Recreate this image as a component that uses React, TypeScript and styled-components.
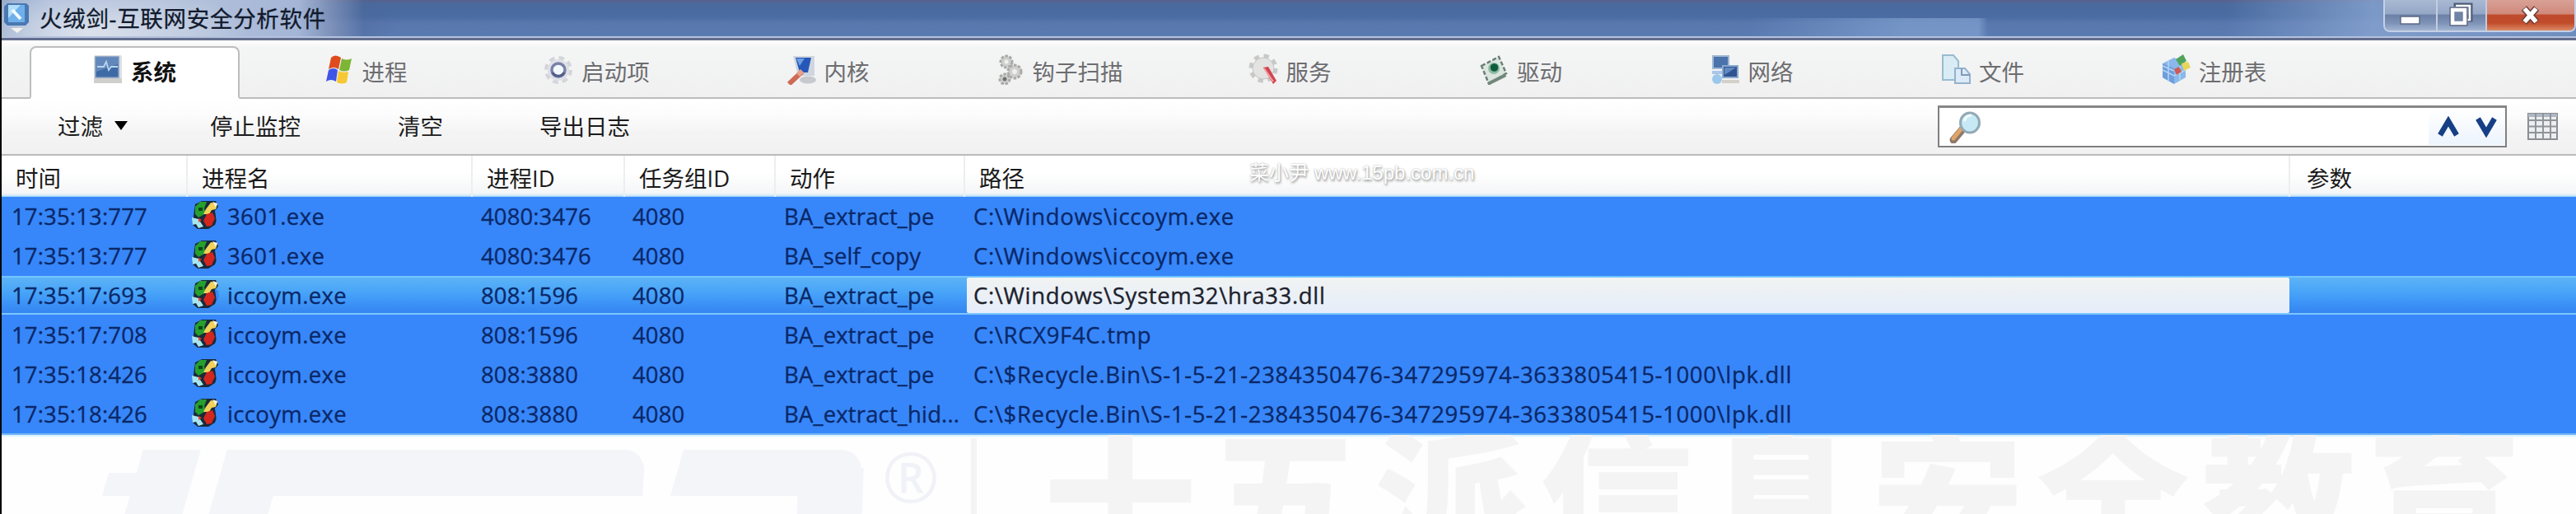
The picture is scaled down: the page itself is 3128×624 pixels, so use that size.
import React from 'react';
import styled, { createGlobalStyle, css } from 'styled-components';

const Global = createGlobalStyle`
  * { box-sizing: border-box; }
  html, body { margin: 0; padding: 0; background: #fff; }
  body { font-family: "Open Sans", "Noto Sans CJK SC", sans-serif; font-size: 27.5px; color: #1c1c1c; }
`;

const Window = styled.div`
  width: 3128px;
  height: 624px;
  overflow: hidden;
  position: relative;
  display: flex;
  flex-direction: column;
  border-left: 2px solid #000;
  background: #fff;
`;

/* ---------- title bar ---------- */
const TitleBar = styled.header`
  height: 49px;
  flex: none;
  display: flex;
  justify-content: space-between;
  border-bottom: 3px solid #626d8e;
  box-shadow: inset 0 -2px 0 #b4c2de;
  background:
    radial-gradient(ellipse 190px 60px at 110px 40px, rgba(225, 230, 238, 0.9), rgba(225, 230, 238, 0) 100%),
    linear-gradient(90deg, rgba(140, 172, 218, 0) 0, rgba(140, 172, 218, 0.55) 65%, rgba(140, 172, 218, 0.55) 96%, rgba(140, 172, 218, 0) 100%) 2120px 22px / 292px 24px no-repeat,
    linear-gradient(90deg, #8da3c8 0, #a9bad8 60px, #b0bfda 250px, #a4b5d6 360px, rgba(140, 155, 190, 0.7) 400px, rgba(76, 100, 150, 0.3) 440px, rgba(75, 110, 165, 0) 480px, rgba(75, 110, 165, 0) 2700px, rgba(140, 168, 212, 0.75) 2880px, rgba(140, 168, 212, 0.4) 100%),
    linear-gradient(180deg, #5a6088 0, #4a699d 4px, #4a6ca2 20px, #5877ad 28px, #5a7cb2 100%);
`;
const Caption = styled.div`
  display: flex;
  align-items: center;
  gap: 12px;
  padding: 0 0 4px 2px;
  height: 46px;
  color: #111a2c;
  font-size: 27.5px;
  letter-spacing: 0.7px;
  -webkit-text-stroke: 0.3px currentColor;
`;
const Controls = styled.div`
  display: flex;
  height: 39px;
  border: 2px solid #c4d0e6;
  border-top: 0;
  border-radius: 0 0 8px 8px;
  overflow: hidden;
`;
const Control = styled.div<{ $w: number; $close?: boolean }>`
  width: ${(p) => p.$w}px;
  display: flex;
  align-items: center;
  justify-content: center;
  border-right: ${(p) => (p.$close ? '0' : '2px solid #c3cde0')};
  background: ${(p) =>
    p.$close
      ? 'linear-gradient(180deg,#d9a096 0,#d08a7c 45%,#bf4a2c 50%,#c04c2b 75%,#dd8a66 100%)'
      : 'linear-gradient(180deg,#a9b9d3 0,#94a7c6 45%,#6c81a6 50%,#7d92b6 75%,#a2b4d2 100%)'};
`;

/* ---------- tabs ---------- */
const Tabs = styled.nav`
  height: 71px;
  flex: none;
  display: flex;
  align-items: flex-end;
  gap: 25.5px;
  padding-left: 34px;
  background: linear-gradient(180deg, #fff 0, #f4f5f5 8px, #f0f0f1 100%);
  box-shadow: inset 0 -2px 0 #bcbcbc;
`;
const Tab = styled.div<{ $active?: boolean }>`
  width: 255px;
  height: 64px;
  flex: none;
  display: flex;
  align-items: center;
  justify-content: center;
  gap: 10px;
  color: #6d6d70;
  border: 2px solid transparent;
  padding-bottom: 4px;
  ${(p) =>
    p.$active &&
    css`
      background: #fff;
      color: #111;
      font-weight: 600;
      border-color: #bdbdbd;
      border-bottom-color: #fff;
      border-radius: 8px 8px 0 0;
    `}
`;
const TabIcon = styled.svg`
  width: 36px;
  height: 38px;
  flex: none;
  margin-top: -4px;
`;

/* ---------- toolbar ---------- */
const Toolbar = styled.div`
  height: 69px;
  flex: none;
  display: flex;
  align-items: center;
  padding: 0 22px 1px 68px;
  background: linear-gradient(180deg, #fff 0, #fcfcfc 20px, #f4f4f4 40px, #f1f1f1 100%);
  border-bottom: 2px solid #bababa;
`;
const ToolButton = styled.div<{ $w: number }>`
  width: ${(p) => p.$w}px;
  display: flex;
  align-items: center;
  gap: 14px;
  padding-bottom: 2px;
`;
const Arrow = styled.span`
  border: 8.5px solid transparent;
  border-top: 11px solid #000;
  border-bottom: 0;
`;
const Search = styled.div`
  width: 691px;
  height: 51px;
  margin-left: auto;
  display: flex;
  align-items: center;
  justify-content: space-between;
  border: 2px solid #808080;
  border-top: 3px solid #878787;
  background: #fff;
  padding-left: 12px;
`;
const Stepper = styled.div`
  width: 93px;
  height: 44px;
  display: flex;
  align-items: center;
  justify-content: space-between;
  padding: 0 10px 0 11px;
  background: linear-gradient(180deg, #fff, #edf4fd);
`;
const GridIcon = styled.svg`
  width: 37px;
  height: 33px;
  margin-left: 25px;
`;

/* ---------- table ---------- */
const columns = '226px 346px 185px 183px 230px 1609px 1fr';
const Head = styled.div`
  height: 50px;
  flex: none;
  display: grid;
  grid-template-columns: ${columns};
  background: linear-gradient(180deg, #fff 0, #fff 40%, #f5f6f7 90%, #d9edf9 96%, #8fcdfb 100%);
`;
const HeadCell = styled.div`
  display: flex;
  align-items: center;
  padding: 1px 0 0 17px;
  border-right: 2px solid #eceef1;
  &:last-child { border-right: 0; padding-left: 20px; }
  color: #1a1a1a;
`;
const Body = styled.div`
  height: 289px;
  flex: none;
  display: flex;
  flex-direction: column;
  background: #3787fa;
  border-bottom: 2px solid #6fb6f8;
`;
const Row = styled.div<{ $selected?: boolean }>`
  flex: 1;
  display: grid;
  grid-template-columns: ${columns};
  color: #0b2868;
  ${(p) =>
    p.$selected &&
    css`
      background: linear-gradient(180deg, #5fb4f6 0, #46a3f8 45%, #3b90f6 75%, #3583f0 100%);
      box-shadow: inset 0 2px 0 #72c5fd, inset 0 -2px 0 #7cc6fd;
    `}
`;
const Cell = styled.div<{ $pad: number; $spacing?: number; $field?: boolean }>`
  display: flex;
  align-items: center;
  gap: 10px;
  padding-left: ${(p) => p.$pad}px;
  white-space: nowrap;
  letter-spacing: ${(p) => p.$spacing || 0}px;
  -webkit-text-stroke: 0.35px currentColor;
  ${(p) =>
    p.$field &&
    css`
      margin: 2px 1px 2px 2px;
      padding-left: ${p.$pad - 2}px;
      border-radius: 2px;
      color: #1d222c;
      background: linear-gradient(180deg, #f1f3f2 0, #ebf0f6 50%, #e6eefb 100%);
    `}
`;
const ProcIcon = styled.svg`
  width: 34px;
  height: 36px;
  flex: none;
  margin-top: -3px;
`;

/* ---------- backdrop brand ---------- */
const Backdrop = styled.section`
  flex: 1;
  position: relative;
  overflow: hidden;
  background: #fefefe;
  box-shadow: inset 0 3px 2px -1px #d8effc;
`;
const Slab = styled.div<{ $x: number; $y: number; $w: number; $h: number; $r?: number; $skew?: number }>`
  position: absolute;
  left: ${(p) => p.$x}px;
  top: ${(p) => p.$y}px;
  width: ${(p) => p.$w}px;
  height: ${(p) => p.$h}px;
  border-radius: 0 ${(p) => p.$r || 0}px 0 0;
  transform: skewX(${(p) => -(p.$skew ?? 16)}deg);
  background: #f4f5f9;
`;
const Registered = styled.div`
  position: absolute;
  left: 1069px;
  top: 2px;
  font-size: 84px;
  line-height: 96px;
  color: #f1f2f8;
`;
const Divider = styled.div`
  position: absolute;
  left: 1177px;
  top: 4px;
  width: 7px;
  height: 100px;
  background: #f4f4f5;
`;
const Slogan = styled.div`
  position: absolute;
  left: 1265px;
  top: -26px;
  font-family: "Noto Sans CJK SC", sans-serif;
  font-weight: 900;
  font-size: 186px;
  line-height: 186px;
  letter-spacing: 15px;
  white-space: nowrap;
  color: #f4f4f5;
`;
const Credit = styled.div`
  position: absolute;
  left: 1515px;
  top: 195px;
  font-family: "Liberation Sans", "Noto Sans CJK SC", sans-serif;
  font-size: 24px;
  line-height: 30px;
  white-space: nowrap;
  color: #fff;
  text-shadow: 0 0 2px #aaa, 1px 2px 3px #999;
`;

/* ---------- drawings ---------- */
const MonitorIcon = () => (
  <TabIcon viewBox="0 0 36 38">
    <rect x="1" y="2" width="34" height="34" rx="2" fill="#dcdfe2" />
    <rect x="1" y="30" width="34" height="6" rx="1" fill="#cfcfcc" />
    <rect x="3" y="4" width="28" height="25" fill="#3e6aa6" stroke="#7f9cc2" strokeWidth="1.500" />
    <path d="M4 5h26v8L4 22z" fill="#6187bb" />
    <path d="M5 16h8l3-6 3 10 3-4h8" fill="none" stroke="#b9d3ee" strokeWidth="1.800" />
  </TabIcon>
);
const FlagIcon = () => (
  <TabIcon viewBox="0 0 36 38">
    <path d="M8 5q5-5 12 0l-3 14q-6-4-12 0z" fill="#df4b1e" />
    <path d="M21 6q6 3 12 0l-3 14q-6 3-12 0z" fill="#7db536" />
    <path d="M5 20q6-4 11 0l-2 14q-6-4-12 0z" fill="#3f55e8" />
    <path d="M17 21q6 3 12 1l-2 13q-6 3-12 0z" fill="#f7c833" />
  </TabIcon>
);
const GearIcon = () => (
  <TabIcon viewBox="0 0 36 38">
    <circle cx="18" cy="20" r="14.5" fill="none" stroke="#d3d5da" strokeWidth="5" strokeDasharray="6.4 5" />
    <circle cx="18" cy="20" r="13" fill="#dfe1e6" />
    <circle cx="18" cy="20" r="8" fill="#f2f7fc" stroke="#7882a8" strokeWidth="3.500" />
    <path d="M11 23a8 8 0 0 0 14 0" fill="none" stroke="#535d8a" strokeWidth="3" />
  </TabIcon>
);
const KernelIcon = () => (
  <TabIcon viewBox="0 0 36 38">
    <path d="M8 3h26v24H14z" fill="#cfd6df" />
    <path d="M11 5h19l-4 18H16z" fill="#2457b8" />
    <path d="M12 6h10l-6 9z" fill="#6e9ee2" />
    <ellipse cx="26" cy="32" rx="10" ry="4.5" fill="#c6c9cd" />
    <path d="M19 22L3 37" stroke="#cf6a55" strokeWidth="6" />
    <path d="M19 21l-5 5" stroke="#e8a08c" strokeWidth="6" />
  </TabIcon>
);
const HookIcon = () => (
  <TabIcon viewBox="0 0 36 38">
    <g fill="#cfcfcd" stroke="#a9a9a8" strokeWidth="3" strokeDasharray="3.4 1.8">
      <circle cx="14" cy="10" r="7" />
      <circle cx="24" cy="22" r="8" />
      <circle cx="12" cy="31" r="6" />
    </g>
    <circle cx="14" cy="10" r="2.500" fill="#f0f0f0" />
    <circle cx="24" cy="22" r="3" fill="#f0f0f0" />
    <circle cx="12" cy="31" r="2.500" fill="#6f6f6e" />
  </TabIcon>
);
const ServiceIcon = () => (
  <TabIcon viewBox="0 0 36 38">
    <circle cx="18" cy="18" r="14.5" fill="none" stroke="#c8c8c8" strokeWidth="6" strokeDasharray="6 5.4" />
    <circle cx="18" cy="18" r="13" fill="#e3e3e2" stroke="#c4c4c4" />
    <path d="M18 17l6-1 10 17-4 4z" fill="#d2434e" />
    <path d="M19 18l11 16" stroke="#f0a3a6" strokeWidth="2" />
  </TabIcon>
);
const DriverIcon = () => (
  <TabIcon viewBox="0 0 36 38">
    <path d="M3 15L24 4l9 20-21 13z" fill="#dbe6e0" stroke="#6c7f76" strokeWidth="2.5" strokeDasharray="5 2.5" />
    <path d="M10 35l22-11 1 4-20 10z" fill="#71877b" />
    <circle cx="18" cy="18" r="7" fill="#8fbba2" />
    <circle cx="18.500" cy="17" r="4.800" fill="#0f5c3c" />
  </TabIcon>
);
const NetworkIcon = () => (
  <TabIcon viewBox="0 0 36 38">
    <rect x="3" y="3" width="19" height="15" fill="#4a72ab" stroke="#9fb6d4" strokeWidth="2" />
    <path d="M2 21h14v4H2z" fill="#a9c6e6" />
    <circle cx="8" cy="31" r="6" fill="#9cc7ec" />
    <rect x="15" y="15" width="18" height="14" fill="#2e5591" stroke="#8ba9d0" strokeWidth="2" />
    <path d="M17 17h14l-14 9z" fill="#6289be" />
    <rect x="14" y="32" width="21" height="4" fill="#d3d0ca" />
  </TabIcon>
);
const FileIcon = () => (
  <TabIcon viewBox="0 0 36 38">
    <path d="M2 2h13l6 7v23H2z" fill="#d9ebf4" stroke="#97bdd0" strokeWidth="2" />
    <path d="M17 18h12l6 7v11H17z" fill="#dceaf7" stroke="#94b3cd" strokeWidth="2" />
    <path d="M25 18v8h10" fill="none" stroke="#7f9bb6" strokeWidth="2" />
  </TabIcon>
);
const RegistryIcon = () => (
  <TabIcon viewBox="0 0 36 38">
    <path d="M2 12l14-7 14 7v17l-14 8-14-8z" fill="#8ab8ea" />
    <path d="M2 12l14 6v19L2 29z" fill="#6e9edb" />
    <path d="M2 20l14 7 14-7M9 9v25M23 15v17M2 15l14 6" fill="none" stroke="#b5d5f5" strokeWidth="1.5" />
    <path d="M18 7l9-6 4 8-8 6z" fill="#4fa45c" />
    <path d="M25 12l8-2 3 7-8 4z" fill="#e6d65a" />
    <path d="M16 19l6-3 3 6-6 4z" fill="#cf5a55" />
  </TabIcon>
);

const Parrot = () => (
  <ProcIcon viewBox="0 0 34 36">
    <path d="M5 5l8-4h17l3 7-4 5 3 9-3 8-8 5H8l-6-5 1-10 1-8z" fill="#1a2a3a" />
    <path d="M5 8l6-6h8l-3 8 2 6-9 5-4-4z" fill="#25a02d" />
    <path d="M9 9h5v4H9z" fill="#0d4514" />
    <path d="M18 11l6-8 8 1-2 7-5 1-3 5h-7z" fill="#f1d25a" />
    <path d="M26 2l6 2-2 5z" fill="#f7f3d8" />
    <path d="M29 12l4 2 1 8-3 6z" fill="#3787fa" />
    <path d="M19 17l7-2 3 7-4 9-6 1-4-7z" fill="#d3261f" />
    <path d="M1 21l8 2 6 9-6 2-3-5-4 1z" fill="#a8e6ee" />
    <path d="M9 22l4 2-4 3z" fill="#e2402c" />
  </ProcIcon>
);

const AppIcon = () => (
  <svg width="32" height="42" viewBox="0 0 32 42">
    <path d="M5 4h23l3 3v20l-4 4H5l-4-4V8z" fill="#4a78b0" />
    <path d="M6 6h20v21H6z" fill="#6db0ec" />
    <path d="M6 6h15L6 22z" fill="#b3dcfa" />
    <path d="M11 12l10 11" stroke="#f4faff" strokeWidth="4" />
    <path d="M9 34h15l-7 6z" fill="#f2f2ee" />
  </svg>
);

const tabs: { label: string; icon: React.FC }[] = [
  { label: '系统', icon: MonitorIcon },
  { label: '进程', icon: FlagIcon },
  { label: '启动项', icon: GearIcon },
  { label: '内核', icon: KernelIcon },
  { label: '钩子扫描', icon: HookIcon },
  { label: '服务', icon: ServiceIcon },
  { label: '驱动', icon: DriverIcon },
  { label: '网络', icon: NetworkIcon },
  { label: '文件', icon: FileIcon },
  { label: '注册表', icon: RegistryIcon },
];

const headings = ['时间', '进程名', '进程ID', '任务组ID', '动作', '路径', '参数'];

const recycle = 'C:\\$Recycle.Bin\\S-1-5-21-2384350476-347295974-3633805415-1000\\lpk.dll';
const rows = [
  ['17:35:13:777', '3601.exe', '4080:3476', '4080', 'BA_extract_pe', 'C:\\Windows\\iccoym.exe'],
  ['17:35:13:777', '3601.exe', '4080:3476', '4080', 'BA_self_copy', 'C:\\Windows\\iccoym.exe'],
  ['17:35:17:693', 'iccoym.exe', '808:1596', '4080', 'BA_extract_pe', 'C:\\Windows\\System32\\hra33.dll'],
  ['17:35:17:708', 'iccoym.exe', '808:1596', '4080', 'BA_extract_pe', 'C:\\RCX9F4C.tmp'],
  ['17:35:18:426', 'iccoym.exe', '808:3880', '4080', 'BA_extract_pe', recycle],
  ['17:35:18:426', 'iccoym.exe', '808:3880', '4080', 'BA_extract_hid...', recycle],
];
const selectedRow = 2;

export default function App() {
  return (
    <>
      <Global />
      <Window>
        <TitleBar>
          <Caption>
            <AppIcon />
            火绒剑-互联网安全分析软件
          </Caption>
          <Controls>
            <Control $w={64}>
              <svg width="28" height="34" viewBox="0 0 28 34">
                <rect x="2" y="18" width="23" height="9" fill="#fff" stroke="#5c6a85" strokeWidth="1.500" />
              </svg>
            </Control>
            <Control $w={60}>
              <svg width="32" height="34" viewBox="0 0 32 34">
                <path d="M9 6V4h18v18h-3" fill="none" stroke="#505d78" strokeWidth="5" />
                <path d="M9 5h17v17h-3" fill="none" stroke="#fff" strokeWidth="2.500" />
                <rect x="5" y="10" width="15" height="16" fill="none" stroke="#505d78" strokeWidth="7" />
                <rect x="5" y="10" width="15" height="16" fill="#6f83a6" stroke="#fff" strokeWidth="4.500" />
              </svg>
            </Control>
            <Control $w={106} $close>
              <svg width="30" height="34" viewBox="0 0 30 34">
                <path d="M7 8l15 17M22 8L7 25" stroke="#6b3a38" strokeWidth="8.500" />
                <path d="M7.500 8.500l14 16M21.500 8.500l-14 16" stroke="#fff" strokeWidth="5.500" />
              </svg>
            </Control>
          </Controls>
        </TitleBar>

        <Tabs>
          {tabs.map(({ label, icon: Icon }, i) => (
            <Tab key={label} $active={i === 0}>
              <Icon />
              {label}
            </Tab>
          ))}
        </Tabs>

        <Toolbar>
          <ToolButton $w={185}>
            过滤
            <Arrow />
          </ToolButton>
          <ToolButton $w={228}>停止监控</ToolButton>
          <ToolButton $w={172}>清空</ToolButton>
          <ToolButton $w={160}>导出日志</ToolButton>
          <Search>
            <svg width="40" height="40" viewBox="0 0 40 40">
              <path d="M16 23L5 36" stroke="#8c7a6c" strokeWidth="9" strokeLinecap="round" />
              <path d="M14 23L5 34" stroke="#e0a569" strokeWidth="5" strokeLinecap="round" />
              <ellipse cx="25" cy="15" rx="11.500" ry="12" fill="#c7e9f6" stroke="#92a9b6" strokeWidth="3" />
              <path d="M18 13q2-7 9-7" fill="none" stroke="#f2fcff" strokeWidth="3" />
            </svg>
            <Stepper>
              <svg width="26" height="26" viewBox="0 0 26 26">
                <path d="M3 23L13 6l10 17" fill="none" stroke="#163f85" strokeWidth="6.500" />
              </svg>
              <svg width="26" height="26" viewBox="0 0 26 26">
                <path d="M3 3l10 17L23 3" fill="none" stroke="#163f85" strokeWidth="6.500" />
              </svg>
            </Stepper>
          </Search>
          <GridIcon viewBox="0 0 37 33">
            <rect x="1" y="1" width="35" height="31" fill="#eceef0" stroke="#8a8e93" strokeWidth="2" />
            <path d="M1 3h35" stroke="#aeb8c3" strokeWidth="4" />
            <path d="M10 1v31M19 1v31M28 1v31M1 9h35M1 16.500h35M1 24h35" stroke="#909499" strokeWidth="2" />
          </GridIcon>
        </Toolbar>

        <Head>
          {headings.map((h) => (
            <HeadCell key={h}>{h}</HeadCell>
          ))}
        </Head>
        <Body>
          {rows.map((r, i) => (
            <Row key={i} $selected={i === selectedRow}>
              <Cell $pad={12} $spacing={0.15}>{r[0]}</Cell>
              <Cell $pad={4} $spacing={0.35}>
                <Parrot />
                {r[1]}
              </Cell>
              <Cell $pad={10} $spacing={0.1}>{r[2]}</Cell>
              <Cell $pad={9} $spacing={0.1}>{r[3]}</Cell>
              <Cell $pad={10} $spacing={0.15}>{r[4]}</Cell>
              <Cell $pad={10} $spacing={0.65} $field={i === selectedRow}>
                {r[5]}
              </Cell>
              <Cell $pad={10} />
            </Row>
          ))}
        </Body>

        <Backdrop>
          <Slab $x={156} $y={18} $w={70} $h={110} />
          <Slab $x={126} $y={46} $w={44} $h={28} />
          <Slab $x={258} $y={18} $w={72} $h={110} />
          <Slab $x={290} $y={18} $w={490} $h={56} $r={26} $skew={4} />
          <Slab $x={820} $y={18} $w={120} $h={56} />
          <Slab $x={900} $y={18} $w={144} $h={56} $r={24} $skew={0} />
          <Slab $x={966} $y={40} $w={79} $h={100} $skew={2} />
          <Registered>®</Registered>
          <Divider />
          <Slogan>十五派信息安全教育</Slogan>
        </Backdrop>
        <Credit>菜小尹 www.15pb.com.cn</Credit>
      </Window>
    </>
  );
}
